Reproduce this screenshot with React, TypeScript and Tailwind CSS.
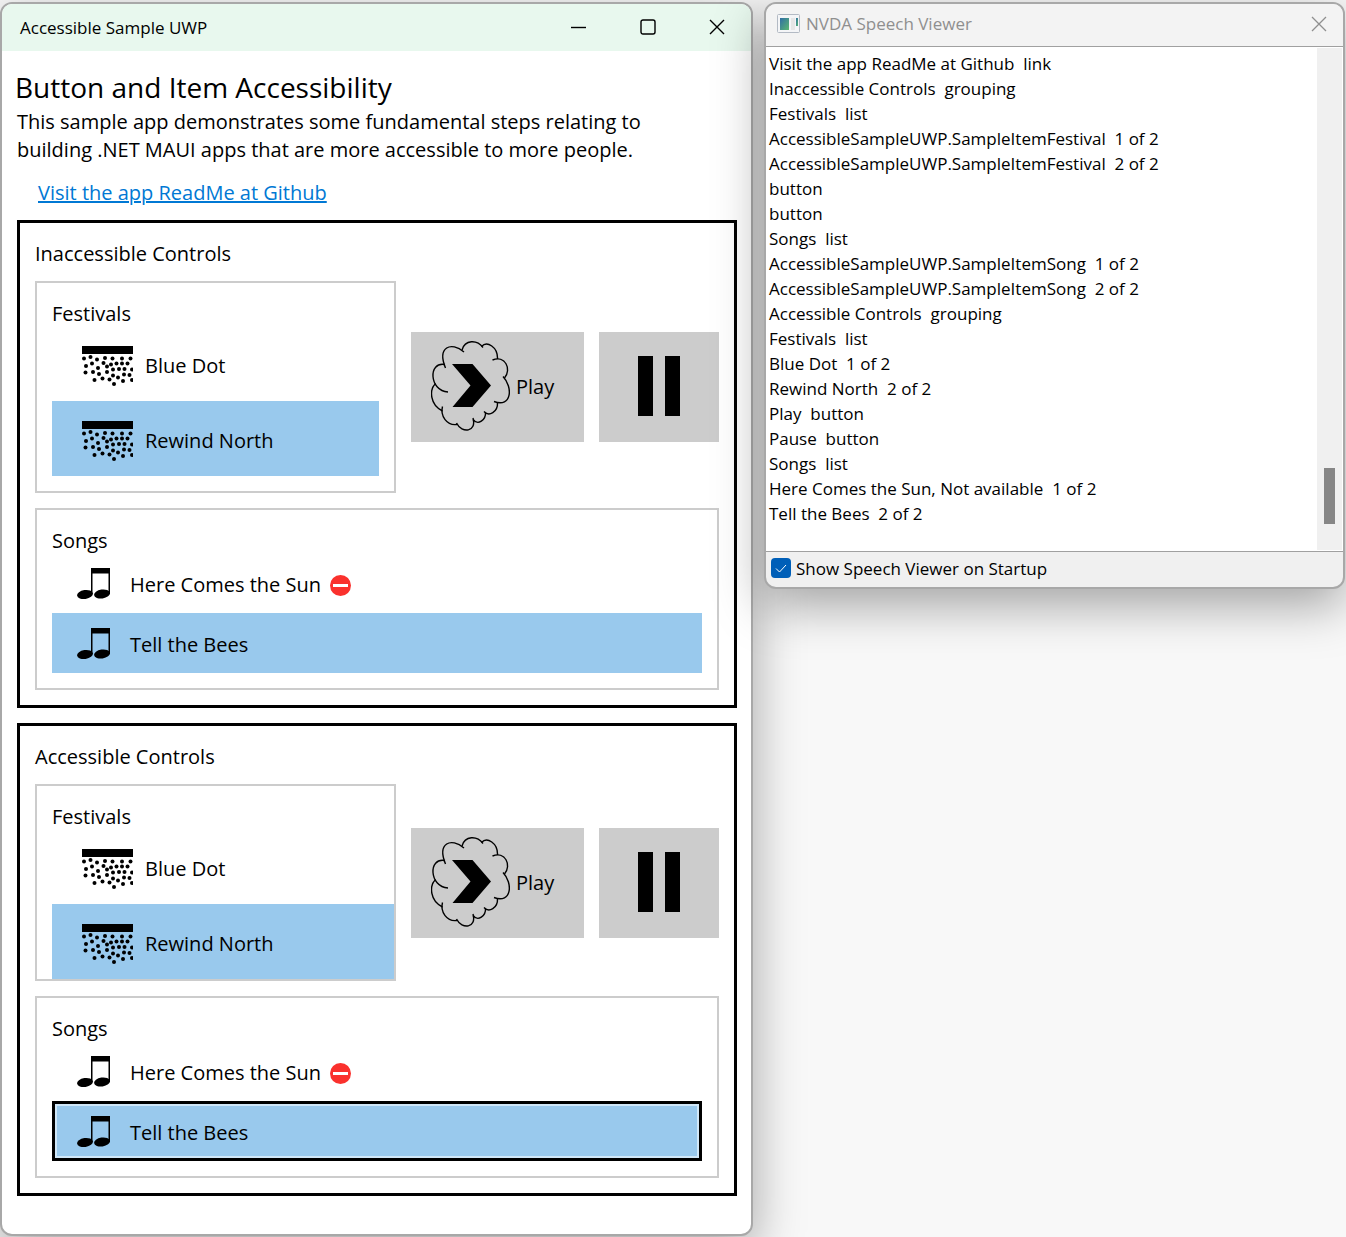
import React from "react";

const CloudPlay = () => (
  <svg className="mb-[2px] shrink-0" width="79" height="90" viewBox="0 0 79 90" fill="none" stroke="#000" strokeWidth="1.4" aria-hidden="true">
    <path d="M14.500 27C6 6 20 0 33 11" />
    <path d="M31 9C34 -1.500 46 -1.500 52 6.500" />
    <path d="M50.500 5.500C56 -0.500 67 6 66.500 18" />
    <path d="M61.500 19C74 14 81 28 73.500 37" />
    <path d="M72 35.500C82 46 81 67 63 60.500" />
    <path d="M66.500 61.500C67 71 58 76 53 70.500" />
    <path d="M54.500 71C55 79 47 85 42 78.500" />
    <path d="M42 77C46 91 31 93 25.500 82" />
    <path d="M26 83.500C16 85 9 75 11.500 65.500" />
    <path d="M11.500 70C-1 64 -2 49 4.500 42.500" />
    <path d="M14 23.500C-3 20 -2 50 17 51" />
    <path d="M21 23H41.500L60 44.500L41.500 66H21.500L39.500 44.500Z" fill="#000" stroke="none" />
  </svg>
);

const dots = [[2, 12.500], [8.500, 11], [15, 13.500], [23, 12], [30.500, 12.500], [40, 12.500], [48.500, 12.500], [10, 17.500], [21.500, 17], [29, 18.500], [34.500, 17.500], [40, 17.500], [45.500, 17.500], [4, 20], [25, 20.500], [16, 22], [31, 23.500], [37, 23], [42.500, 23], [50, 23.500], [3.500, 26.500], [11, 26], [17, 28], [25, 26], [31, 29.500], [42, 28.500], [47.500, 29], [36, 31.500], [20.500, 32.500], [12.500, 34], [27.500, 33.500], [41, 35], [50, 34], [32, 38]];

const Crowd = () => (
  <svg className="shrink-0" width="51" height="40" viewBox="0 0 51 40" aria-hidden="true">
    <rect width="51" height="8" />
    {dots.map(([x, y]) => (
      <circle key={`${x}-${y}`} cx={x} cy={y} r="2" />
    ))}
  </svg>
);

const Notes = () => (
  <svg className="shrink-0" width="34" height="34" viewBox="0 0 34 34" aria-hidden="true">
    <path d="M14 0H33V26H31.500V5.500H15.500V26H14Z" />
    <ellipse cx="8" cy="26.500" rx="8" ry="4.500" transform="rotate(-8 8 26.500)" />
    <ellipse cx="25" cy="26" rx="8" ry="4.500" transform="rotate(-8 25 26)" />
  </svg>
);

const NoEntry = () => (
  <svg className="ml-[9px] shrink-0" width="21" height="21" viewBox="0 0 21 21" role="img" aria-label="Not available">
    <circle cx="10.500" cy="10.500" r="10.500" fill="#fa312d" />
    <rect x="3" y="9" width="15" height="3" fill="#fff" />
  </svg>
);

function Group({ title, focused }: { title: string; focused: boolean }) {
  const button = "flex h-[110px] shrink-0 items-center bg-[#ccc]";
  return (
    <section className="border-3 border-black p-[15px]">
      <h2 className="mb-[15px] pt-1 leading-6">{title}</h2>
      <div className="mb-[15px] flex items-center gap-[15px]">
        <div className={focused ? "min-w-0 flex-1 border-2 border-[#ccc] pt-[15px] pl-[15px]" : "min-w-0 flex-1 border-2 border-[#ccc] p-[15px]"}>
          <h3 className="pt-1 leading-6">Festivals</h3>
          <ul>
            <li className="flex h-[75px] items-center gap-3 pt-1 pl-[30px]"><Crowd />Blue Dot</li>
            <li className="flex h-[75px] items-center gap-3 bg-[#99c9ed] pt-1 pl-[30px]"><Crowd />Rewind North</li>
          </ul>
        </div>
        <button className={`${button} w-[173px] gap-[6px] pl-5`}><CloudPlay />Play</button>
        <button className={`${button} w-[120px] justify-center gap-3 pb-[2px]`} aria-label="Pause">
          <span className="h-[60px] w-[15px] bg-black" />
          <span className="h-[60px] w-[15px] bg-black" />
        </button>
      </div>
      <div className="border-2 border-[#ccc] p-[15px]">
        <h3 className="pt-1 leading-6">Songs</h3>
        <ul>
          <li className="flex h-[60px] items-center pt-1 pl-[25px]"><Notes /><span className="ml-[19px]">Here Comes the Sun</span><NoEntry /></li>
          <li className={focused ? "flex h-[60px] items-center border-3 border-black bg-[#99c9ed] pt-1 pl-[22px] inset-ring-2 inset-ring-[#d0e7f8]" : "flex h-[60px] items-center bg-[#99c9ed] pt-1 pl-[25px]"}>
            <Notes /><span className="ml-[19px]">Tell the Bees</span>
          </li>
        </ul>
      </div>
    </section>
  );
}

const log = [
  "Visit the app ReadMe at Github  link",
  "Inaccessible Controls  grouping",
  "Festivals  list",
  "AccessibleSampleUWP.SampleItemFestival  1 of 2",
  "AccessibleSampleUWP.SampleItemFestival  2 of 2",
  "button",
  "button",
  "Songs  list",
  "AccessibleSampleUWP.SampleItemSong  1 of 2",
  "AccessibleSampleUWP.SampleItemSong  2 of 2",
  "Accessible Controls  grouping",
  "Festivals  list",
  "Blue Dot  1 of 2",
  "Rewind North  2 of 2",
  "Play  button",
  "Pause  button",
  "Songs  list",
  "Here Comes the Sun, Not available  1 of 2",
  "Tell the Bees  2 of 2",
];

export default function App() {
  return (
    <div className="grid min-h-screen grid-cols-[753fr_581fr] items-start gap-[11px] overflow-hidden bg-[#f8f8f8] pt-[2px] pr-px pb-[2px] font-['Open_Sans',sans-serif] text-black">
      <main className="rounded-xl border-2 border-[#a8a8a8] bg-white pb-[38px] text-[20px] leading-7 shadow-[0_16px_50px_rgba(0,0,0,0.35)]">
        <header className="flex h-[47px] items-center rounded-t-[10px] bg-[#e8f8ee] pl-[18px] text-[17px]">
          <span className="flex-1">Accessible Sample UWP</span>
          <button aria-label="Minimize" className="flex h-full w-[69px] items-center justify-center"><svg width="16" height="16" stroke="#000" strokeWidth="1.4"><path d="M0 7.500H15" /></svg></button>
          <button aria-label="Maximize" className="flex h-full w-[69px] items-center justify-center pb-[2px]"><svg width="16" height="16" fill="none" stroke="#000" strokeWidth="1.4"><rect x="1" y="1" width="14" height="14" rx="2" /></svg></button>
          <button aria-label="Close" className="flex h-full w-[69px] items-center justify-center pb-[2px]"><svg width="16" height="16" stroke="#000" strokeWidth="1.4"><path d="M1 1L15 15M15 1L1 15" /></svg></button>
        </header>
        <h1 className="px-[13px] pt-4 pb-px text-[28px] leading-10">Button and Item Accessibility</h1>
        <div className="pr-[14px] pl-[15px]">
          <p className="max-w-[650px]">This sample app demonstrates some fundamental steps relating to building .NET MAUI apps that are more accessible to more people.</p>
          <p className="mt-[15px] mb-[13px] pl-[21px]"><a href="#readme" className="text-[#0078d4] underline">Visit the app ReadMe at Github</a></p>
          <div className="flex flex-col gap-[15px]">
            <Group title="Inaccessible Controls" focused={false} />
            <Group title="Accessible Controls" focused />
          </div>
        </div>
      </main>

      <aside className="overflow-hidden rounded-xl border-2 border-[#a8a8a8] bg-[#f0f0f0] text-[17px] shadow-[0_16px_50px_rgba(0,0,0,0.35)]">
        <header className="flex h-[42px] items-center bg-[#f3f3f3] pb-[2px] pl-[11px] text-[#8f8f8f]">
          <svg className="mb-[2px]" width="23" height="19" viewBox="0 0 23 19" aria-hidden="true">
            <defs><linearGradient id="pane" x2="1" y2="1"><stop stopColor="#2f6ea5" /><stop offset="1" stopColor="#5bb870" /></linearGradient></defs>
            <rect x="0.500" y="0.500" width="22" height="18" rx="1" fill="#f4f5f7" stroke="#b3bac4" />
            <rect x="3" y="4" width="9" height="12" fill="url(#pane)" />
            <rect x="14" y="4" width="4" height="12" fill="#e6e6e6" />
            <rect x="19" y="4" width="2" height="8" fill="url(#pane)" />
          </svg>
          <span className="ml-[6px] flex-1">NVDA Speech Viewer</span>
          <button aria-label="Close" className="flex h-full w-12 items-center justify-center"><svg width="16" height="16" stroke="#8f8f8f" strokeWidth="1.3"><path d="M1 1L15 15M15 1L1 15" /></svg></button>
        </header>
        <div className="flex border-y border-[#a0a0a0] bg-white">
          <ul className="flex-1 pt-1 pb-[25px] pl-[3px] leading-[25px] whitespace-pre">
            {log.map((line, i) => <li key={i}>{line}</li>)}
          </ul>
          <div className="my-px mr-px flex w-[25px] flex-col items-center bg-[#f0f0f0]">
            <div className="mt-[420px] h-14 w-[11px] bg-[#868686]" />
          </div>
        </div>
        <label className="flex h-[35px] items-center gap-[5px] pb-px pl-[5px]">
          <span className="relative mb-[2px] flex size-5">
            <input type="checkbox" defaultChecked className="size-5 appearance-none rounded bg-[#005fb8]" />
            <svg className="pointer-events-none absolute inset-0" width="20" height="20" fill="none" stroke="#fff"><path d="M5 10.500L8.500 14L15 7" /></svg>
          </span>
          Show Speech Viewer on Startup
        </label>
      </aside>
    </div>
  );
}
